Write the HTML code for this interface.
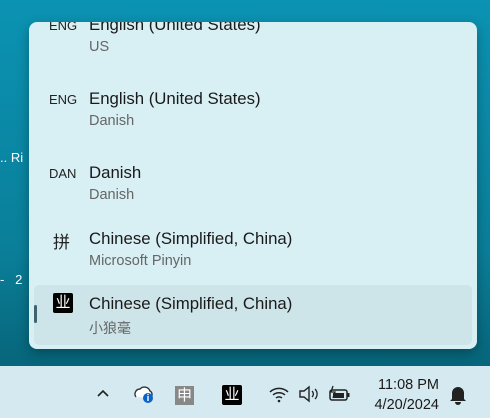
<!DOCTYPE html>
<html><head><style>
body{margin:0;width:490px;height:418px;overflow:hidden;position:relative;font-family:"Liberation Sans","Noto Sans CJK SC",sans-serif;background:linear-gradient(#0b93b3,#0a7f99 60%,#07657a 88%);}
.panel{position:absolute;left:29px;top:22px;width:448px;height:327px;background:#d8eff4;border-radius:8px;overflow:hidden;box-shadow:0 4px 12px rgba(0,0,0,.3);}
.row{position:absolute;left:0;width:448px;}
.lab{position:absolute;left:20px;font-size:13px;color:#222;}
.t{position:absolute;left:60px;font-size:16.8px;color:#1a1a1a;}
.s{position:absolute;left:60px;font-size:14.5px;color:#666;}
.sel{position:absolute;left:5px;top:263px;width:438px;height:60px;background:#cde4e9;border-radius:5px;}
.bar{position:absolute;left:5px;top:283px;width:3px;height:18px;background:#3d6470;border-radius:2px;}
.task{position:absolute;left:0;top:366px;width:490px;height:52px;background:#d5eaf0;}
.dt{position:absolute;color:#fff;font-size:13px;}
</style></head><body>
<div class="dt" style="left:0;top:150px">.. Ri</div>
<div class="dt" style="left:0;top:272px">-&nbsp;&nbsp;&nbsp;2</div>
<div class="panel">
 <div class="row" style="top:-6px"><span class="lab" style="top:2px">ENG</span><span class="t" style="top:-1px">English (United States)</span><span class="s" style="top:23px">US</span></div>
 <div class="row" style="top:68px"><span class="lab" style="top:2px">ENG</span><span class="t" style="top:-1px">English (United States)</span><span class="s" style="top:23px">Danish</span></div>
 <div class="row" style="top:142px"><span class="lab" style="top:2px">DAN</span><span class="t" style="top:-1px">Danish</span><span class="s" style="top:23px">Danish</span></div>
 <div class="row" style="top:208px"><span class="lab" style="top:-2px;font-size:17px;left:24px">拼</span><span class="t" style="top:-1px">Chinese (Simplified, China)</span><span class="s" style="top:23px">Microsoft Pinyin</span></div>
 <div class="sel"></div><div class="bar"></div>
 <div class="row" style="top:273px"><span class="lab" style="top:-2px;left:24px;width:20px;height:20px;background:#000;color:#fff;font-size:15px;text-align:center;line-height:20px;border-radius:2px">业</span><span class="t" style="top:-1px">Chinese (Simplified, China)</span><span class="s" style="top:23px;font-size:14px">小狼毫</span></div>
</div>
<div class="task">
 <svg style="position:absolute;left:96px;top:22px" width="14" height="10"><path d="M2 8 L7 3 L12 8" stroke="#222" stroke-width="1.6" fill="none"/></svg>
 <svg style="position:absolute;left:133px;top:17px" width="24" height="22"><path d="M3 14a5 5 0 0 1 4-8a6 6 0 0 1 10 2a4 4 0 0 1 0 7" fill="#fff" stroke="#333" stroke-width="1.4"/><circle cx="15" cy="15" r="5" fill="#0a63c9"/><rect x="14.3" y="13" width="1.4" height="5" fill="#fff"/><rect x="14.3" y="11" width="1.4" height="1.2" fill="#fff"/></svg>
 <div style="position:absolute;left:175px;top:20px;width:19px;height:19px;background:#888;color:#fff;font-size:15px;text-align:center;line-height:19px">申</div>
 <div style="position:absolute;left:222px;top:19px;width:20px;height:20px;background:#000;color:#fff;font-size:15px;text-align:center;line-height:20px;border-radius:2px">业</div>
 <svg style="position:absolute;left:268px;top:19px" width="22" height="18"><g fill="none" stroke="#222" stroke-width="1.5"><path d="M2 7a13 13 0 0 1 18 0"/><path d="M5 10a9 9 0 0 1 12 0"/><path d="M8 13a4.5 4.5 0 0 1 6 0"/></g><circle cx="11" cy="16" r="1.3" fill="#222"/></svg>
 <svg style="position:absolute;left:298px;top:19px" width="22" height="18"><path d="M2 6h4l5-4v14l-5-4H2z" fill="none" stroke="#222" stroke-width="1.4"/><path d="M14 6a4 4 0 0 1 0 6M17 4a7 7 0 0 1 0 10" fill="none" stroke="#222" stroke-width="1.3"/></svg>
 <svg style="position:absolute;left:328px;top:18px" width="24" height="20"><rect x="2" y="6" width="17" height="10" rx="2" fill="none" stroke="#222" stroke-width="1.5"/><rect x="19.5" y="9" width="2" height="4" fill="#222"/><path d="M5 2l-2 6h4l-2 6" fill="none" stroke="#222" stroke-width="1.3"/><rect x="5" y="9" width="11" height="5" fill="#222"/></svg>
 <div style="position:absolute;right:51px;top:9px;font-size:14.5px;color:#1a1a1a;text-align:right;line-height:20px">11:08 PM<br>4/20/2024</div>
 <svg style="position:absolute;left:449px;top:18px" width="18" height="22"><path d="M3 15V9a6 6 0 0 1 12 0v6l2 2H1z" fill="#222"/><path d="M6 18a3 3 0 0 0 6 0z" fill="#222"/></svg>
</div>
</body></html>
